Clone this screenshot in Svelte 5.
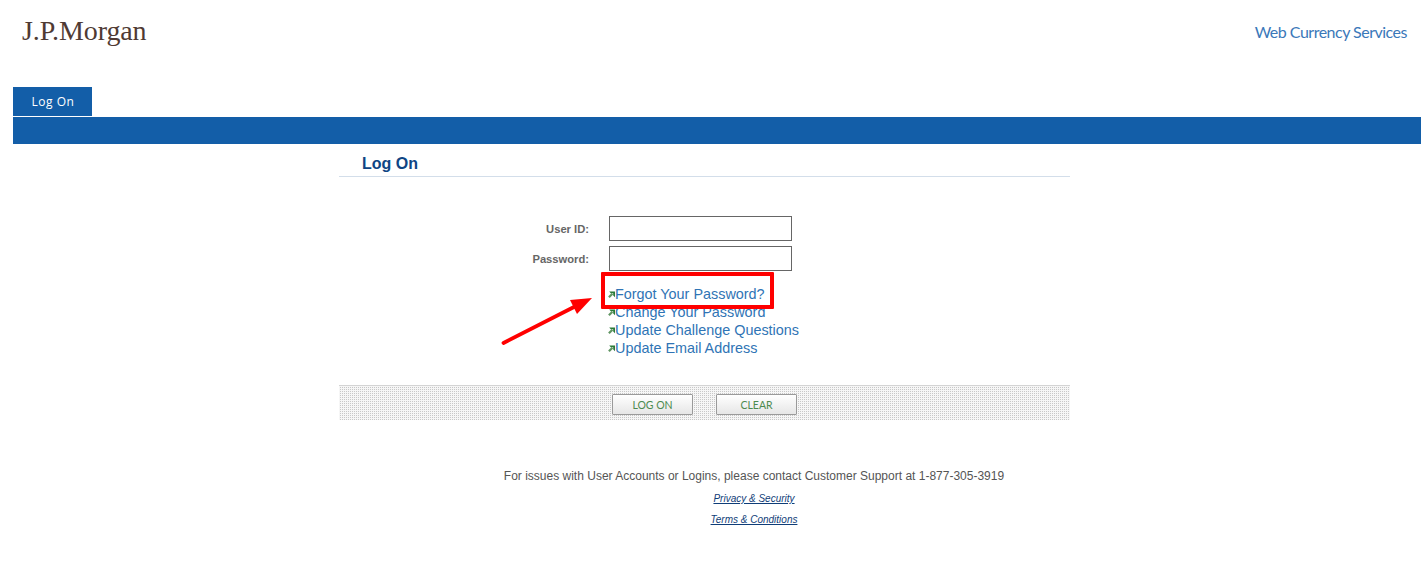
<script>
	const links = [
		'Forgot Your Password?',
		'Change Your Password',
		'Update Challenge Questions',
		'Update Email Address'
	];
</script>

<div class="page">
	<header class="top">
		<div class="logo">J.P.Morgan</div>
		<div class="product">Web Currency Services</div>
	</header>

	<nav class="nav">
		<div class="tab">Log On</div>
		<div class="bar"></div>
	</nav>

	<main class="panel">
		<h1 class="title">Log On</h1>

		<form class="form" onsubmit={(e) => e.preventDefault()}>
			<div class="row">
				<label for="uid">User ID:</label>
				<input id="uid" type="text" />
			</div>
			<div class="row">
				<label for="pwd">Password:</label>
				<input id="pwd" type="password" />
			</div>

			<ul class="links">
				{#each links as link}
					<li>
						<svg class="arrow-icon" width="7" height="7" viewBox="0 0 7 7" aria-hidden="true">
							<path d="M0.9 6.2 L4.4 2.7" stroke="#5f9461" stroke-width="2.2" fill="none" />
							<path d="M1.2 0.4 H7 V6.2 L5.2 4.6 V2.2 H2.8 Z" fill="#2a7a38" />
						</svg>
						<a href="#top">{link}</a>
					</li>
				{/each}
			</ul>

			<div class="actions">
				<button type="submit">LOG ON</button>
				<button type="reset">CLEAR</button>
			</div>
		</form>

		<footer class="foot">
			<p>For issues with User Accounts or Logins, please contact Customer Support at 1-877-305-3919</p>
			<a href="#top">Privacy &amp; Security</a>
			<a href="#top">Terms &amp; Conditions</a>
		</footer>
	</main>

	<!-- annotation drawn over the screenshot -->
	<div class="callout"></div>
	<svg class="pointer" width="100" height="60" viewBox="0 0 100 60" aria-hidden="true">
		<path d="M3.5 49 L74 13" stroke="#ff0000" stroke-width="3.8" stroke-linecap="round" fill="none" />
		<path d="M92 4 L70 6 L77 20 Z" fill="#ff0000" />
	</svg>
</div>

<style>
	:global(body) {
		margin: 0;
		background: #fff;
	}

	.page {
		position: relative;
		height: 579px;
		overflow: hidden;
		font-family: 'Liberation Sans', Arial, sans-serif;
	}

	.top {
		display: flex;
		justify-content: space-between;
		height: 87px;
		box-sizing: border-box;
		padding: 14px 14px 0 22px;
	}

	.logo {
		font-family: 'Liberation Serif', serif;
		font-size: 28px;
		line-height: 34px;
		letter-spacing: -0.1px;
		color: #4f3a34;
	}

	.product {
		font-family: 'Lato', sans-serif;
		font-size: 16px;
		line-height: 22px;
		margin-top: 7px;
		letter-spacing: -0.5px;
		color: #3a78b9;
	}

	.nav {
		margin-left: 13px;
	}

	.tab {
		width: 79px;
		height: 29px;
		padding-left: 1px;
		box-sizing: border-box;
		background: #135ea8;
		color: #fff;
		font-family: 'Open Sans', sans-serif;
		font-size: 12px;
		letter-spacing: 0.5px;
		line-height: 29px;
		text-align: center;
	}

	.bar {
		height: 27px;
		margin-top: 1px;
		background: #135ea8;
	}

	.panel {
		width: 731px;
		margin-left: 339px;
	}

	.title {
		margin: 0;
		height: 33px;
		box-sizing: border-box;
		padding: 10px 0 0 23px;
		border-bottom: 1px solid #d3deea;
		font-size: 16px;
		line-height: 19px;
		font-weight: 700;
		color: #0f4584;
	}

	.form {
		padding-top: 39px;
	}

	.row {
		display: flex;
		align-items: center;
		height: 25px;
		margin-bottom: 5px;
	}

	.row label {
		width: 250px;
		margin-right: 20px;
		text-align: right;
		font-size: 11.2px;
		font-weight: 700;
		color: #666;
	}

	.row input {
		width: 183px;
		height: 25px;
		box-sizing: border-box;
		border: 1px solid #666;
		background: #fff;
		padding: 0;
		outline: none;
	}

	.links {
		list-style: none;
		margin: 14px 0 0;
		padding: 0 0 0 269px;
	}

	.links li {
		display: flex;
		align-items: center;
		height: 18px;
	}

	.arrow-icon {
		flex: none;
	}

	.links a {
		font-size: 14.4px;
		line-height: 18px;
		color: #2f74b5;
		text-decoration: none;
	}

	.actions {
		display: flex;
		justify-content: center;
		gap: 23px;
		height: 35px;
		margin-top: 28px;
		box-sizing: border-box;
		padding-top: 8px;
		border-top: 1px solid #d4d4d4;
		background:
			linear-gradient(90deg, #f6f6f6 1px, transparent 1px) 0 0 / 2px 2px,
			linear-gradient(#f6f6f6 1px, #c8c8c8 1px) 0 0 / 2px 2px;
	}

	.actions button {
		width: 81px;
		height: 21px;
		box-sizing: border-box;
		padding: 0;
		border: 1px solid #9a9a9a;
		border-radius: 1px;
		background: linear-gradient(#fff, #e6e6e6);
		font-family: 'Lato', sans-serif;
		font-size: 10.5px;
		letter-spacing: 0;
		color: #4c8a4f;
	}

	.foot {
		display: flex;
		flex-direction: column;
		align-items: center;
		padding: 48px 0 0 99px;
		font-size: 12px;
		color: #555;
	}

	.foot p {
		margin: 0 0 4px;
		line-height: 16px;
	}

	.foot a {
		font-size: 10px;
		font-style: italic;
		line-height: 21px;
		color: #0f3d78;
	}

	.callout {
		position: absolute;
		left: 601px;
		top: 272px;
		width: 173px;
		height: 37px;
		box-sizing: border-box;
		border: 4px solid #ff0000;
		border-radius: 1px;
	}

	.pointer {
		position: absolute;
		left: 500px;
		top: 294px;
	}
</style>
